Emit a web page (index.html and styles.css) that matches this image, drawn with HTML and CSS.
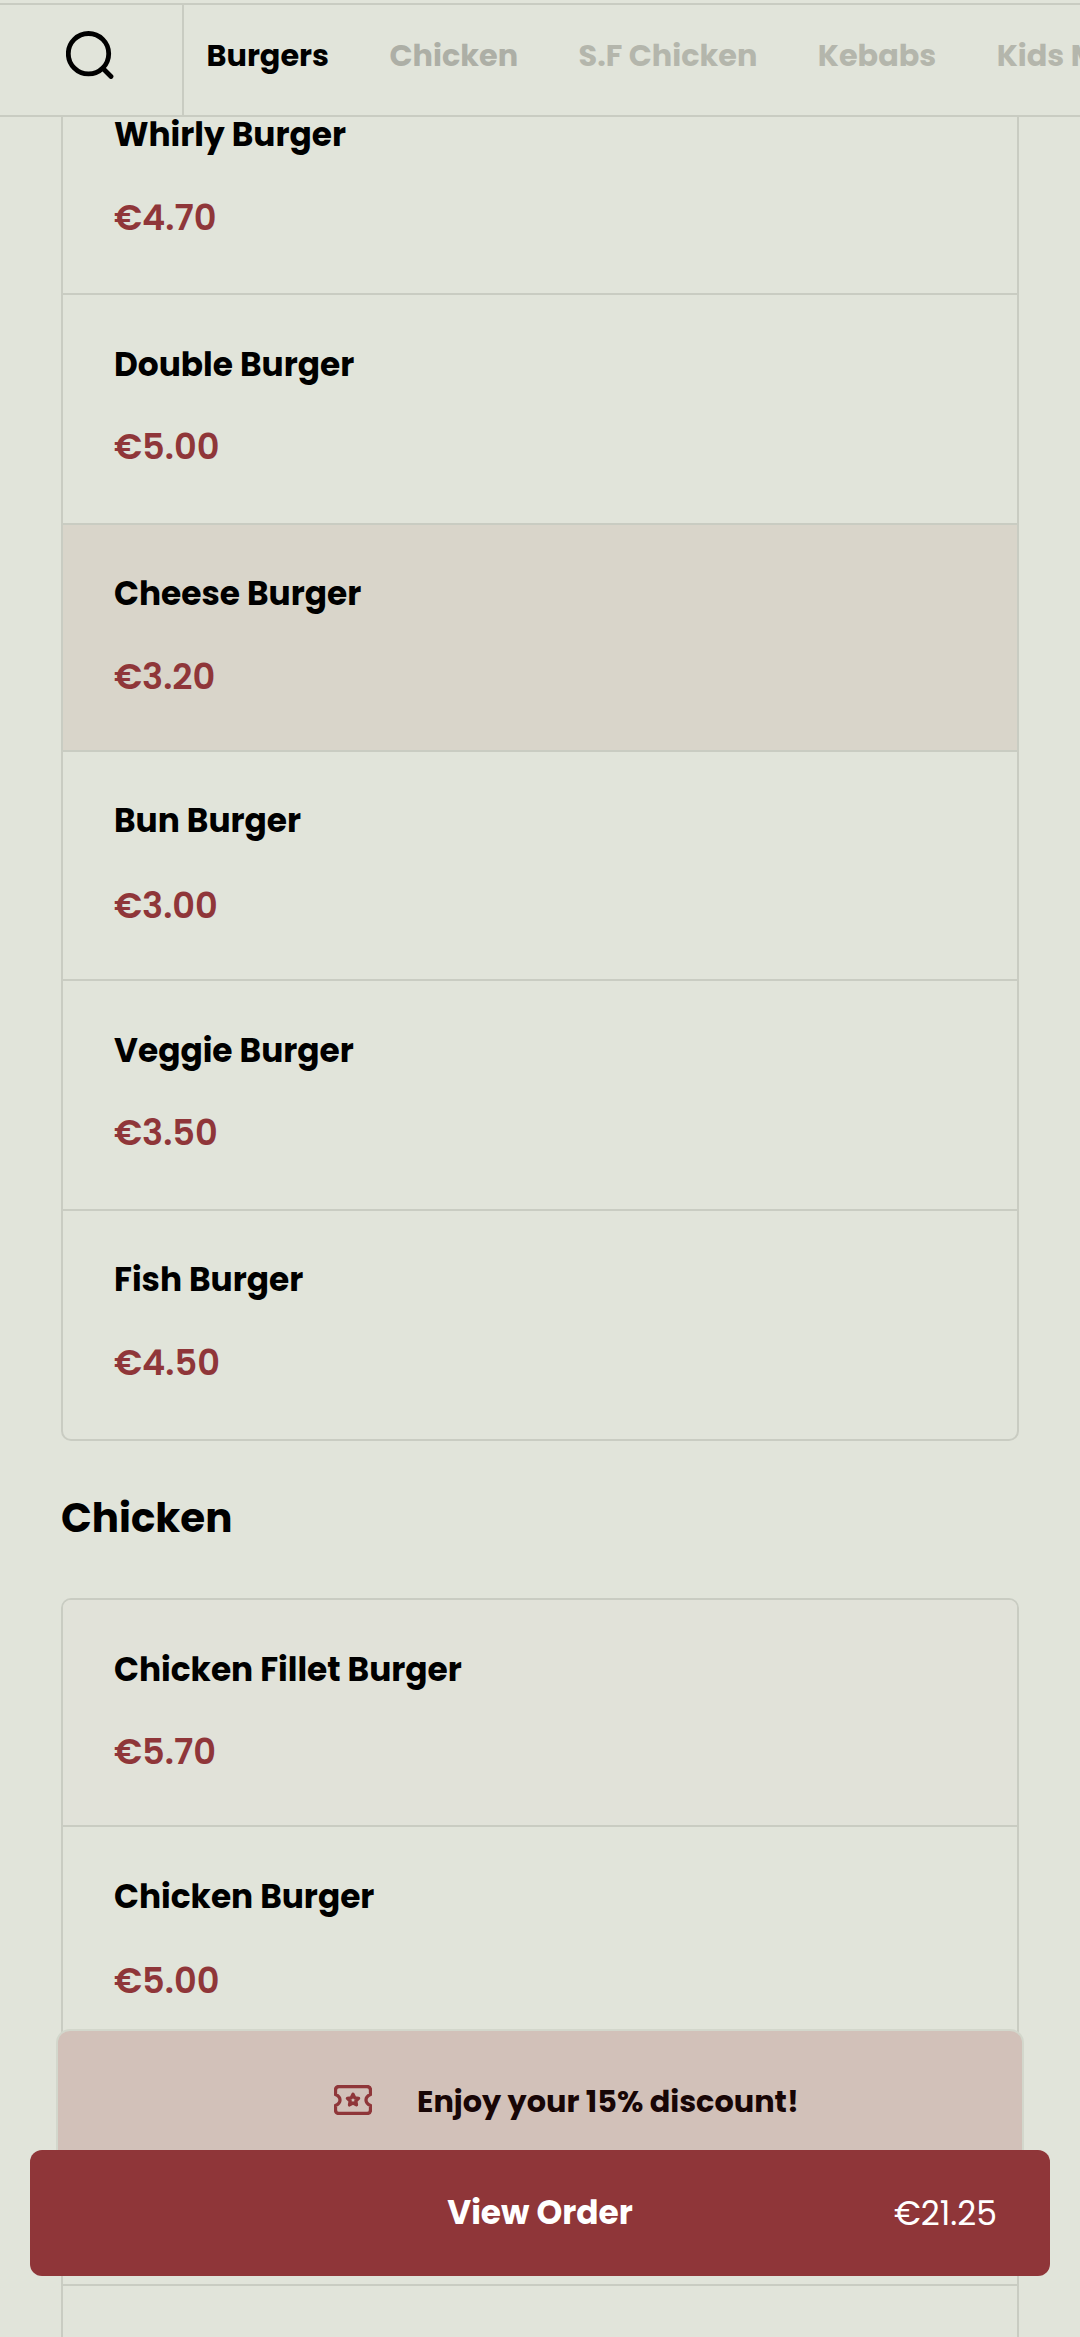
FILE: index.html
```html
<!DOCTYPE html>
<html lang="en">
<head>
<meta charset="utf-8">
<title>Menu</title>
<link rel="stylesheet" href="styles.css">
</head>
<body>
<div class="app">
  <header class="topbar">
    <div class="search" role="button" aria-label="Search">
      <svg class="search-icon" viewBox="0 0 48 48"><circle cx="22.500" cy="22.700" r="20.200"/><path d="M37 37.500l8 8"/></svg>
    </div>
    <nav class="tabs">
      <a class="tab tab-active">Burgers</a>
      <a class="tab tab-near">Chicken</a>
      <a class="tab">S.F Chicken</a>
      <a class="tab">Kebabs</a>
      <a class="tab">Kids Meals</a>
    </nav>
  </header>
  <main class="menu">
    <ul class="list list-continued">
      <li class="item"><h3 class="name">Whirly Burger</h3><p class="price">€4.70</p></li>
      <li class="item"><h3 class="name">Double Burger</h3><p class="price">€5.00</p></li>
      <li class="item item-short item-pressed"><h3 class="name">Cheese Burger</h3><p class="price">€3.20</p></li>
      <li class="item"><h3 class="name">Bun Burger</h3><p class="price">€3.00</p></li>
      <li class="item"><h3 class="name">Veggie Burger</h3><p class="price">€3.50</p></li>
      <li class="item"><h3 class="name">Fish Burger</h3><p class="price">€4.50</p></li>
    </ul>
    <h2 class="section-title">Chicken</h2>
    <ul class="list">
      <li class="item item-short item-fading"><h3 class="name">Chicken Fillet Burger</h3><p class="price">€5.70</p></li>
      <li class="item"><h3 class="name">Chicken Burger</h3><p class="price">€5.00</p></li>
      <li class="item"></li>
      <li class="item"></li>
    </ul>
  </main>
  <footer class="order-dock">
    <div class="promo">
      <svg class="ticket" viewBox="0 0 38 30"><path d="M5 1.500h28q3.500 0 3.500 3.500v4.500q-4.500 2-4.500 5.500t4.500 5.500v4.500q0 3.500-3.500 3.500H5q-3.500 0-3.500-3.500v-4.500q4.500-2 4.500-5.500t-4.500-5.500V5q0-3.500 3.500-3.500z"/><path d="M19 9.300l1.700 3.500 3.900.5-2.800 2.700.7 3.900-3.500-1.900-3.500 1.900.7-3.900-2.800-2.700 3.900-.5z"/></svg>
      <span class="promo-text">Enjoy your 15% discount!</span>
    </div>
    <button class="order"><span class="order-label">View Order</span><span class="order-total">€21.25</span></button>
  </footer>
</div>
</body>
</html>
```
FILE: styles.css
```css
* { box-sizing: border-box; margin: 0; padding: 0; }
body { background: #e1e4da; color: #000; font-family: Poppins, Inter, sans-serif; }
button { border: 0; background: none; font: inherit; color: inherit; }
.app { position: relative; height: 2337px; overflow: hidden; padding-top: 3px; display: flex; flex-direction: column; }
.topbar { flex: none; height: 114px; display: flex; border-top: 2px solid #c9ccc2; border-bottom: 2px solid #c9ccc2; background: #e1e4da; position: relative; z-index: 1; }
.search { width: 184px; flex: none; border-right: 2px solid #c9ccc2; padding: 26px 0 0 66px; }
.search-icon { display: block; width: 48px; height: 48px; fill: none; stroke: #000; stroke-width: 4.800; stroke-linecap: round; }
.tabs { display: flex; gap: 60.500px; padding-left: 22.500px; white-space: nowrap; overflow: hidden; }
.tab { font-size: 30.300px; font-weight: 700; line-height: 102px; color: #b4b6ac; }
.tab-active { color: #000; }
.tab-near { color: #adafa6; }
.menu { padding: 0 61px; }
.list { list-style: none; border: 2px solid #c9ccc2; border-radius: 10px; overflow: hidden; }
.list-continued { margin-top: -53.500px; }
.item { height: 229.500px; border-bottom: 2px solid #c9ccc2; padding: 46.800px 0 0 51px; }
.item-short { height: 227px; }
.item:last-child { height: 228.500px; border-bottom: 0; }
.item-pressed { background: #d9d5ca; }
.item-fading { background: #e1e2d9; }
.name { font-size: 32.800px; line-height: 46px; font-weight: 700; }
.price { margin-top: 34.500px; font-size: 35.200px; line-height: 50px; font-weight: 600; color: #8f3639; }
.item-short + .item .price { margin-top: 36.500px; }
.section-title { margin: 47px 0 50px; font-size: 40.400px; line-height: 60px; font-weight: 700; }
.order-dock { position: absolute; left: 30px; right: 30px; bottom: 61px; z-index: 2; }
.promo { height: 121px; margin: 0 26px; border: 2px solid #d3d7cc; border-bottom: 0; border-radius: 14px 14px 0 0; background: #d2c1b9; display: flex; padding-left: 276px; gap: 45px; }
.ticket { flex: none; width: 38px; height: 30px; margin-top: 54px; fill: none; stroke: #8f3639; stroke-width: 3.300; stroke-linejoin: round; }
.promo-text { color: #180606; font-size: 30.300px; line-height: 141px; font-weight: 700; white-space: nowrap; }
.order { display: grid; grid-template-columns: 1fr auto 1fr; align-items: center; width: 100%; height: 126px; border-radius: 12px; background: #8f3639; color: #fff; }
.order-label { grid-column: 2; font-size: 32.800px; font-weight: 700; }
.order-total { text-align: right; padding: 2px 53px 0 0; font-size: 33px; }
```
